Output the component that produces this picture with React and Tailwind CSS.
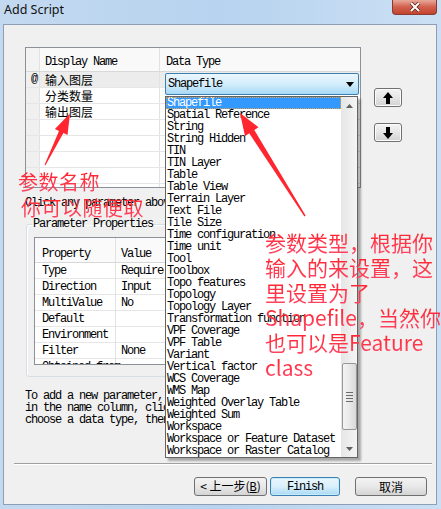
import React from "react";

const MONO =
  "font-['Liberation_Mono','Noto_Sans_CJK_SC',monospace] text-[12px] tracking-[-1.2px] text-black";
const CJK = "font-['Noto_Sans_CJK_SC',sans-serif] tracking-normal";

const types = [
  "Shapefile",
  "Spatial Reference",
  "String",
  "String Hidden",
  "TIN",
  "TIN Layer",
  "Table",
  "Table View",
  "Terrain Layer",
  "Text File",
  "Tile Size",
  "Time configuration",
  "Time unit",
  "Tool",
  "Toolbox",
  "Topo features",
  "Topology",
  "Topology Layer",
  "Transformation function",
  "VPF Coverage",
  "VPF Table",
  "Variant",
  "Vertical factor",
  "WCS Coverage",
  "WMS Map",
  "Weighted Overlay Table",
  "Weighted Sum",
  "Workspace",
  "Workspace or Feature Dataset",
  "Workspace or Raster Catalog",
];

const props = [
  ["Type", "Required"],
  ["Direction", "Input"],
  ["MultiValue", "No"],
  ["Default", ""],
  ["Environment", ""],
  ["Filter", "None"],
  ["Obtained from", ""],
];

function UpArrow() {
  return (
    <svg width="10" height="12" viewBox="0 0 10 12">
      <path d="M5 0 L10 6 L7 6 L7 12 L3 12 L3 6 L0 6 Z" fill="#000" />
    </svg>
  );
}
function DownArrow() {
  return (
    <svg width="10" height="12" viewBox="0 0 10 12">
      <path d="M3 0 L7 0 L7 6 L10 6 L5 12 L0 6 L3 6 Z" fill="#000" />
    </svg>
  );
}

function SideButton({ children }) {
  return (
    <div className="w-[28px] h-[19px] rounded-[3px] border border-[#707070] bg-gradient-to-b from-[#f3f3f3] via-[#e6e6e6] to-[#d2d2d2] flex items-center justify-center shadow-[inset_0_0_0_1px_#fcfcfc]">
      {children}
    </div>
  );
}

function RedLine({ children, className }) {
  return (
    <div className={"h-[25px] leading-[25px] " + (className || "")}>
      <span className="bg-gradient-to-b from-[#ff0c0c] to-[#ff4868] bg-clip-text text-transparent">
        {children}
      </span>
    </div>
  );
}

export default function App() {
  const rows = [
    ["@", "输入图层"],
    ["", "分类数量"],
    ["", "输出图层"],
    ["", ""],
    ["", ""],
    ["", ""],
    ["", ""],
    ["", ""],
  ];
  return (
    <div className="relative w-[441px] h-[509px] overflow-hidden bg-gradient-to-r from-[#c3d9f0] via-[#b7d3ef] to-[#cbdff4]">
      {/* title bar */}
      <div className="h-[24px] flex items-start justify-between">
        <div className="pl-[4px] pt-[2px] font-['Noto_Sans',sans-serif] text-[12.5px] leading-[16px] text-[#111]">
          Add Script
        </div>
        <div className="mr-[4px] w-[45px] h-[15px] rounded-b-[4px] border border-t-0 border-[#8a3a32] bg-gradient-to-b from-[#e8a99b] via-[#d0604c] to-[#c2432f] flex items-center justify-center">
          <svg width="12" height="10" viewBox="0 0 12 10">
            <path d="M2 1 L10 9 M10 1 L2 9" stroke="#5a1a10" strokeWidth="3.4" />
            <path d="M2 1 L10 9 M10 1 L2 9" stroke="#fff" strokeWidth="2" />
          </svg>
        </div>
      </div>

      <div className="flex h-[481px]">
        <div className="w-[3px]" />
        <div className="w-[434px] border border-[#8e9fb5] bg-[#f0f0f0] flex flex-col">
          {/* upper section */}
          <div className="flex ml-[21px] mt-[22px]">
            <div className="w-[336px] h-[141px] border border-[#8c9099] bg-white overflow-hidden">
              <div className="grid grid-cols-[14px_120px_1fr] h-[24px] bg-[#f9f9f9] border-b border-[#d8d8d8]">
                <div className="border-r border-[#e2e2e2] bg-[#f3f3f3]" />
                <div className={MONO + " border-r border-[#e2e2e2] pl-[5px] pt-[8px] leading-[12px]"}>
                  Display Name
                </div>
                <div className={MONO + " pl-[6px] pt-[8px] leading-[12px]"}>Data Type</div>
              </div>
              {rows.map((r, i) => (
                <div
                  key={i}
                  className={
                    "grid grid-cols-[14px_120px_1fr] h-[16px] border-b border-[#e6e6e6] " +
                    (i === 0 ? "bg-[#ececec]" : "")
                  }
                >
                  <div className={MONO + " border-r border-[#e2e2e2] bg-[#f0f0f0] pl-[5px] leading-[15px]"}>
                    {r[0]}
                  </div>
                  <div className={"border-r border-[#e2e2e2] pl-[5px] text-[12px] leading-[15px] text-black " + CJK}>
                    {r[1]}
                  </div>
                  <div />
                </div>
              ))}
            </div>
            <div className="ml-[13px] mt-[41px] flex flex-col gap-[16px]">
              <SideButton>
                <UpArrow />
              </SideButton>
              <SideButton>
                <DownArrow />
              </SideButton>
            </div>
          </div>

          <div className="ml-[21px] mt-[9px] w-[140px] overflow-hidden">
            <div className={MONO + " leading-[12px] whitespace-nowrap"}>
              Click any parameter above to see its properties below.
            </div>
          </div>

          <fieldset className="ml-[22px] mt-[9px] w-[326px] border border-[#d5dfe5] rounded-[3px] pb-[11px] shadow-[inset_1px_1px_0_#ffffff]">
            <legend className={MONO + " ml-[5px] px-[1px] leading-[12px]"}>Parameter Properties</legend>
            <div className="mt-[7px] ml-[7px] w-[300px] h-[128px] border border-[#8c9099] bg-white overflow-hidden">
              <div className="grid grid-cols-[81px_1fr] h-[25px] bg-[#fafafa] border-b border-[#d8d8d8]">
                <div className={MONO + " border-r border-[#e2e2e2] pl-[7px] pt-[10px] leading-[12px]"}>Property</div>
                <div className={MONO + " pl-[5px] pt-[10px] leading-[12px]"}>Value</div>
              </div>
              {props.map((p, i) => (
                <div key={i} className="grid grid-cols-[81px_1fr] h-[16px] border-b border-[#e6e6e6]">
                  <div className={MONO + " border-r border-[#e2e2e2] pl-[7px] leading-[16px] whitespace-nowrap"}>{p[0]}</div>
                  <div className="pl-[5px]">
                    <div className={MONO + " w-[43px] overflow-hidden leading-[16px] whitespace-nowrap"}>{p[1]}</div>
                  </div>
                </div>
              ))}
            </div>
          </fieldset>

          <div className="ml-[21px] mt-[13px] w-[140px] overflow-hidden">
            <div className={MONO + " leading-[12px] whitespace-nowrap"}>
              <div>To add a new parameter, click an empty row</div>
              <div>in the name column, click in the Data Type column to</div>
              <div>choose a data type, then set its properties.</div>
            </div>
          </div>

          <div className="ml-[10px] mt-[37px] w-[418px] h-[1px] bg-[#a0a0a0] shadow-[0_1px_0_#ffffff]" />

          <div className="mt-[13px] flex justify-end pr-[9px]">
            <div className="w-[73px] h-[19px] rounded-[3px] border border-[#707070] bg-gradient-to-b from-[#f3f3f3] via-[#e8e8e8] to-[#d4d4d4] flex items-center justify-center">
              <span className={MONO + " tracking-normal leading-[12px]"}>
                <span className={CJK}>&lt; 上一步(</span>
                <span className="underline">B</span>
                <span className={CJK}>)</span>
              </span>
            </div>
            <div className="ml-[3px] w-[70px] h-[19px] rounded-[3px] border border-[#3c7fb1] bg-gradient-to-b from-[#eaf6fd] via-[#d9f0fc] to-[#a9daf4] flex items-center justify-center shadow-[inset_0_0_0_1px_#c6ebfd]">
              <span className={MONO + " leading-[12px]"}>Finish</span>
            </div>
            <div className="ml-[15px] w-[72px] h-[19px] rounded-[3px] border border-[#707070] bg-gradient-to-b from-[#f3f3f3] via-[#e8e8e8] to-[#d4d4d4] flex items-center justify-center">
              <span className={"text-[12px] leading-[12px] text-black " + CJK}>取消</span>
            </div>
          </div>
        </div>
        <div className="w-[4px]" />
      </div>

      {/* combobox editor */}
      <div className="absolute left-[165px] top-[73px] w-[194px] h-[22px] rounded-[2px] border border-[#3c7fb1] bg-gradient-to-b from-[#ecf7fd] via-[#d3edfb] to-[#a7d9f5] flex items-center justify-between pl-[2px] pr-[4px]">
        <span className={MONO + " leading-[12px]"}>Shapefile</span>
        <svg width="8" height="5" viewBox="0 0 8 5">
          <path d="M0 0 L8 0 L4 5 Z" fill="#000" />
        </svg>
      </div>

      {/* dropdown list */}
      <div className="absolute left-[165px] top-[96px] w-[193px] h-[362px] border border-[#646464] bg-white flex shadow-[3px_3px_2px_rgba(0,0,0,0.3)]">
        <div className="flex-1 overflow-hidden">
          {types.map((t, i) => (
            <div
              key={t}
              className={
                MONO +
                " h-[12px] leading-[12px] pl-[1px] whitespace-nowrap " +
                (i === 0 ? "bg-[#3399ff] text-white outline outline-1 outline-dotted outline-offset-[-1px] outline-[#d9a24a]" : "")
              }
            >
              {t}
            </div>
          ))}
        </div>
        <div className="w-[16px] h-full bg-gradient-to-r from-[#e6e6e6] to-[#f4f4f4] flex flex-col items-center">
          <div className="h-[17px] flex items-center justify-center">
            <svg width="7" height="4" viewBox="0 0 7 4">
              <path d="M0 4 L3.5 0 L7 4 Z" fill="#606060" />
            </svg>
          </div>
          <div className="mt-[249px] w-[15px] h-[67px] rounded-[2px] border border-[#979797] bg-gradient-to-r from-[#f4f4f4] via-[#e9e9e9] to-[#d9d9d9] flex flex-col items-center justify-center gap-[2px]">
            <div className="w-[7px] h-[1px] bg-[#6b6b6b]" />
            <div className="w-[7px] h-[1px] bg-[#6b6b6b]" />
            <div className="w-[7px] h-[1px] bg-[#6b6b6b]" />
            <div className="w-[7px] h-[1px] bg-[#6b6b6b]" />
          </div>
          <div className="mt-auto h-[17px] flex items-center justify-center">
            <svg width="7" height="4" viewBox="0 0 7 4">
              <path d="M0 0 L7 0 L3.5 4 Z" fill="#606060" />
            </svg>
          </div>
        </div>
      </div>

      {/* red annotation arrows */}
      <svg className="absolute left-0 top-0 pointer-events-none" width="441" height="509" viewBox="0 0 441 509">
        <polygon
          points="45.5,165.2 63.4,133.1 67.5,135.0 70,113.5 54.9,128.9 59.0,130.9 44.6,164.8"
          fill="#ff2630"
        />
        <polygon
          points="305.6,215.6 254.3,130.0 258.5,127.3 240,113 245.0,136.2 249.2,133.3 304.4,216.4"
          fill="#ff2630"
        />
      </svg>

      {/* red annotation text */}
      <div className="absolute left-[18px] top-[169px] font-['Noto_Sans_CJK_SC',sans-serif] text-[20px] tracking-[0.5px]">
        <RedLine className="h-[26px] leading-[26px]">参数名称</RedLine>
        <RedLine className="h-[26px] leading-[26px] ml-[3px]">你可以随便取</RedLine>
      </div>
      <div className="absolute left-[265px] top-[230px] font-['Noto_Sans_CJK_SC',sans-serif] text-[21px] whitespace-nowrap">
        <RedLine>参数类型，根据你</RedLine>
        <RedLine>输入的来设置，这</RedLine>
        <RedLine>里设置为了</RedLine>
        <RedLine>Shapefile，当然你</RedLine>
        <RedLine>也可以是Feature</RedLine>
        <RedLine>class</RedLine>
      </div>
    </div>
  );
}
